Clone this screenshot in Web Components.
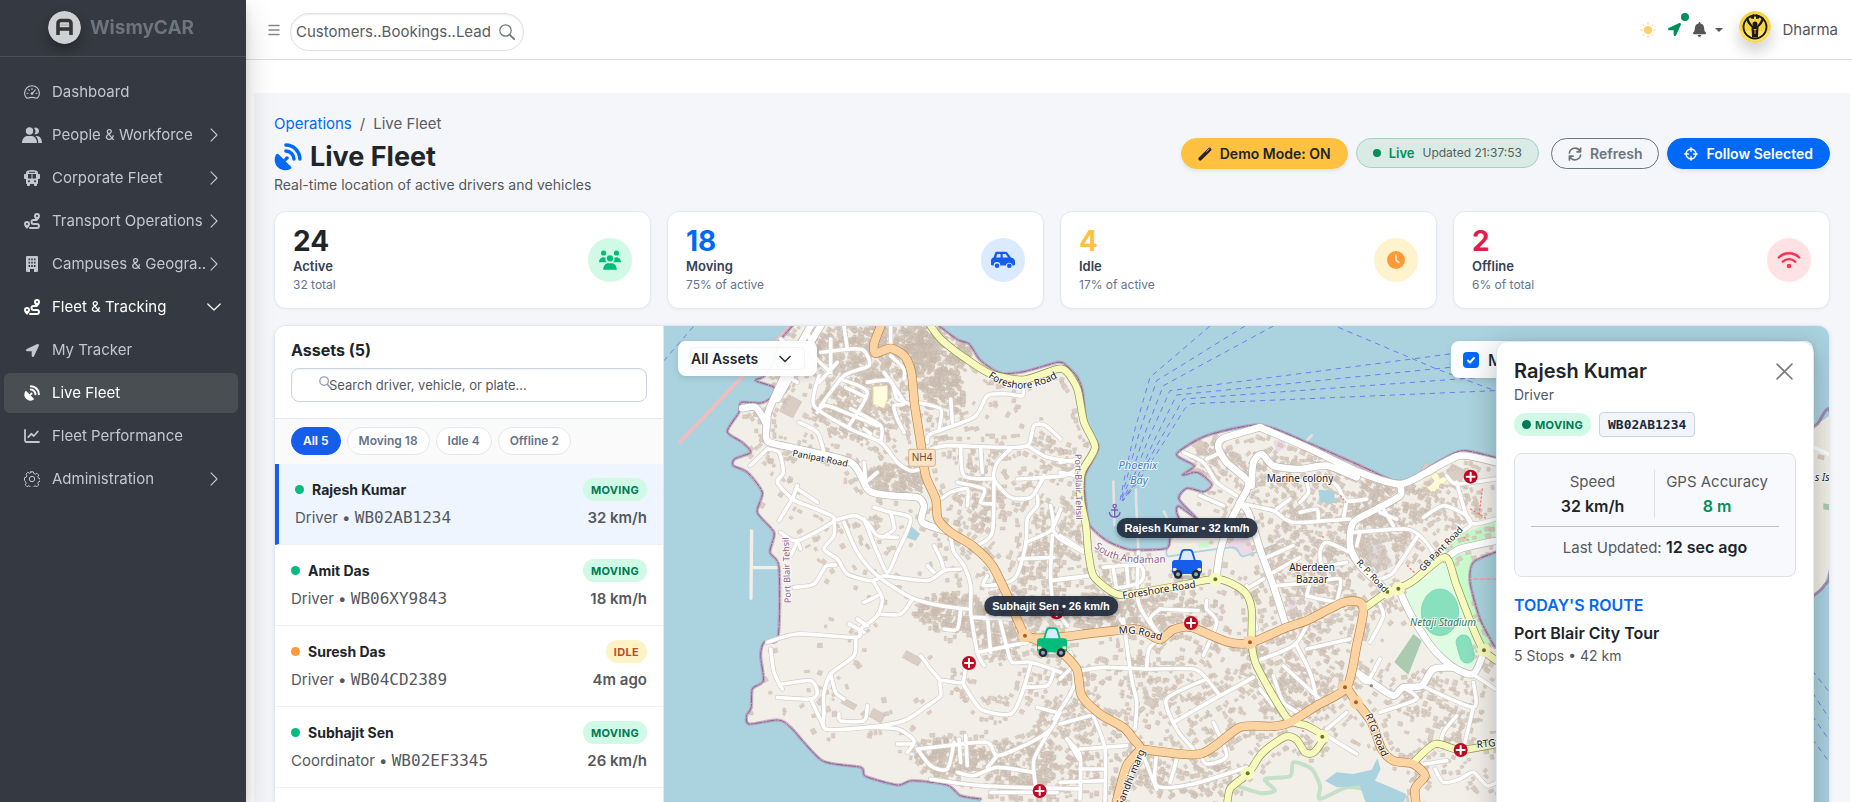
<!DOCTYPE html>
<html lang="en">
<head>
<meta charset="utf-8">
<meta name="viewport" content="width=device-width, initial-scale=1">
<title>WismyCAR – Live Fleet</title>
<style>
html, body { margin: 0; height: 100%; }
body { font: 16px/24px Inter, "Liberation Sans", sans-serif; color: #212529; background: #fff; overflow: hidden; }
</style>
</head>
<body>
<fleet-app></fleet-app>
<script>
const define = (tag, html, setup) => customElements.define(tag, class extends HTMLElement {
  constructor() {
    super();
    this.attachShadow({ mode: 'open' });
  }
  connectedCallback() {
    if (this.shadowRoot.childNodes.length) return;
    const t = document.createElement('template');
    t.innerHTML = '<style>*{box-sizing:border-box}:host([hidden]){display:none}</style>' +
      (typeof html === 'function' ? html(n => this.getAttribute(n) || '') : html);
    this.shadowRoot.append(t.content.cloneNode(true));
    if (setup) setup(this.shadowRoot, this);
  }
});

/* ---------- icons ---------- */
const line = (d, w = 1) => `<path d="${d}" fill="none" stroke="currentColor" stroke-width="${w}" stroke-linecap="round" stroke-linejoin="round"/>`;
const ICONS = {
  speed: ['0 0 16 16', line('M2.6 14C1.2 12.7.6 11 .6 9.2a7.4 7.4 0 0 1 14.8 0c0 1.800-.6 3.500-2 4.800-1.200.5-1.800-.6-5.400-.6s-4.200 1.100-5.400.6zM8 4.400v1M4.700 5.700l.7.7M3 9.300h1M12 9.300h1M8 9.600l3.300-3.800', 1.1) + '<circle cx="8" cy="9.600" r="1.300" fill="currentColor"/>'],
  people: ['0 0 20 16', '<circle cx="7.500" cy="4" r="3.700"/><path d="M12 .9a3.400 3.400 0 1 1 .5 6.200 5 5 0 0 0-.5-6.200zM0 16c0-4 2.700-7 5-7h5c2.300 0 5 3 5 7zM16.300 16c0-3-1-5.500-2.800-7H15c3 0 5 3 5 7z"/>'],
  bus: ['0 0 16 16', '<path fill-rule="evenodd" d="M8 0c4 0 6 1 6 2.500V4h1c.6 0 1 .5 1 1v3c0 .6-.4 1-1 1h-1v4c0 .6-.4 1-1 1v1c0 .6-.4 1-1 1h-1c-.6 0-1-.4-1-1v-1H6v1c0 .6-.4 1-1 1H4c-.6 0-1-.4-1-1v-1c-.6 0-1-.4-1-1V9H1c-.6 0-1-.4-1-1V5c0-.500.4-1 1-1h1V2.500C2 1 4 0 8 0zM4 4v4.500h3.500V4zm4.500 0v4.500H12V4zM5 10.300a1 1 0 1 0 0 2 1 1 0 0 0 0-2zm6 0a1 1 0 1 0 0 2 1 1 0 0 0 0-2zM5 1.800v1h6v-1z"/>'],
  route: ['0 0 16 16', '<path fill-rule="evenodd" d="M13 0a3 3 0 0 1 3 3c0 1.500-1.500 3.500-2.500 4.500h-1C11.500 6.500 10 4.500 10 3a3 3 0 0 1 3-3zm0 2a1 1 0 1 0 0 2 1 1 0 0 0 0-2zM3 8a3 3 0 0 1 3 3c0 1.500-1.500 3.500-2.500 4.500h-1C1.500 14.500 0 12.500 0 11a3 3 0 0 1 3-3zm0 2a1 1 0 1 0 0 2 1 1 0 0 0 0-2z"/>' + line('M12.500 7H9.500a2 2 0 0 0 0 4h3.500a2 2 0 0 1 0 4H6', 1.900)],
  building: ['0 0 12 16', '<path fill-rule="evenodd" d="M1 0h10a1 1 0 0 1 1 1v14a1 1 0 0 1-1 1H8v-3H4v3H1a1 1 0 0 1-1-1V1a1 1 0 0 1 1-1zm1.500 2.500v1.800h1.600V2.500zm2.700 0v1.800h1.600V2.500zm2.700 0v1.800h1.600V2.500zM2.500 5.800v1.800h1.600V5.800zm2.700 0v1.800h1.600V5.800zm2.700 0v1.800h1.600V5.800zM2.500 9.100v1.800h1.600V9.100zm2.700 0v1.800h1.600V9.100zm2.700 0v1.800h1.600V9.100z"/>'],
  arrow: ['0 0 512 512', '<path d="M444.520 3.520L28.740 195.420c-47.970 22.390-31.980 92.750 19.190 92.750h175.910v175.910c0 51.170 70.360 67.170 92.750 19.190l191.900-415.780c15.990-38.380-25.590-79.970-63.970-63.970z"/>'],
  dish: ['0 0 16 16', '<path d="M1.200 6.600c.3-.6.900-.7 1.400-.2l2.900 2.900.8-.8a1.100 1.100 0 1 1 1.200 1.200l-.8.8 2.900 2.900c.5.500.4 1.100-.2 1.400A6 6 0 0 1 1.200 6.600z"/>' + line('M6.800 1.200a8 8 0 0 1 8 8M6.800 4.600a4.600 4.600 0 0 1 4.600 4.600', 2)],
  chart: ['0 0 16 14', line('M1 1v10.500c0 .9.6 1.500 1.500 1.500H15M4.300 8.200l3-3.400 2.500 2.200 4-4.500', 1.800)],
  gear: ['0 0 16 16', line('M6.700.8h2.600l.5 1.700 1.500.7 1.600-.9 1.800 1.800-.9 1.600.7 1.500 1.700.5v2.600l-1.700.5-.7 1.500.9 1.600-1.800 1.800-1.600-.9-1.500.7-.5 1.700H6.700l-.5-1.700-1.500-.7-1.600.9-1.800-1.800.9-1.600-.7-1.500L.5 9.300V6.700l1.700-.5.7-1.500L2 3.100l1.800-1.800 1.600.9 1.500-.7z') + '<circle cx="8" cy="8" r="2.700" fill="none" stroke="currentColor"/>'],
  right: ['0 0 8 14', line('M1 .8l6 6.200-6 6.200', 1.100)],
  down: ['0 0 14 8', line('M.8 1L7 7l6.200-6', 1.200)],
  chev: ['0 0 12 8', line('M1 1.500l5 5 5-5', 1.700)],
  menu: ['0 0 12 12', line('M1 1.500h10M1 6h10M1 10.500h10', 1.600)],
  search: ['0 0 16 16', '<circle cx="6.500" cy="6.500" r="5.700" fill="none" stroke="currentColor" stroke-width="1.200"/>' + line('M10.800 10.800l4.400 4.400', 1.800)],
  find: ['0 0 14 14', '<circle cx="5.500" cy="5.500" r="4.600" fill="none" stroke="currentColor" stroke-width="1.500"/>' + line('M9 9l4 4', 1.800)],
  sun: ['0 0 16 16', '<circle cx="8" cy="8" r="4"/>' + line('M8 .6v1.600M8 13.800v1.600M.6 8h1.600M13.800 8h1.600M2.800 2.800l1.100 1.100M12.100 12.100l1.100 1.100M2.800 13.200l1.100-1.100M12.100 3.900l1.100-1.100')],
  bell: ['0 0 448 512', '<path d="M224 512c35.320 0 63.970-28.650 63.970-64H160.030c0 35.350 28.650 64 63.970 64zm215.390-149.710c-19.320-20.760-55.470-51.990-55.470-154.290 0-77.700-54.480-139.900-127.940-155.160V32c0-17.670-14.320-32-31.980-32s-31.980 14.330-31.980 32v20.840C118.560 68.100 64.080 130.300 64.080 208c0 102.300-36.150 133.530-55.470 154.290-6 6.450-8.660 14.160-8.610 21.710.11 16.400 12.980 32 32.100 32h383.800c19.120 0 32-15.600 32.100-32 .05-7.550-2.610-15.270-8.610-21.710z"/>'],
  wand: ['0 0 14 14', line('M2.200 11.800l9.400-9.400', 3.600) + '<path d="M8.600 4.600l2.700-2.600" stroke="#ffc13f" stroke-width=".9" stroke-linecap="round"/>'],
  refresh: ['0 0 14 14', line('M1.400 5.800A5.700 5.700 0 0 1 12 4.200M12.600 8.200A5.700 5.700 0 0 1 2 9.800M12.600 1v3.800H9M1.400 13V9.200H5', 1.700)],
  target: ['0 0 14 14', '<circle cx="7" cy="7" r="4.900" fill="none" stroke="currentColor" stroke-width="1.600"/>' + line('M7 .7v3.800M7 9.500v3.800M.7 7h3.800M9.500 7h3.800', 1.300)],
  users: ['0 0 22 20', '<circle cx="4.600" cy="3" r="2.600"/><circle cx="17.400" cy="3" r="2.600"/><circle cx="11" cy="8.300" r="3.100"/><path d="M0 12.300c0-2.700 2-5 4.600-5 .8 0 1.500.2 2 .5-.6 1.800.1 3.500 1.200 4.500zM22 12.300c0-2.700-2-5-4.600-5-.8 0-1.500.2-2 .5.6 1.800-.1 3.500-1.200 4.500zM4.200 19.800c0-4 2.200-6.600 5.300-6.600h3c3.100 0 5.300 2.600 5.300 6.600z"/>'],
  car: ['0 0 24 18', '<path fill-rule="evenodd" d="M5.800.8h8.400c.9 0 1.800.5 2.400 1.200L20 6.500c2.300.2 4 1.900 4 4.100v2.600c0 .7-.5 1.200-1.200 1.200h-1.300a3.300 3.300 0 0 0-6.500 0H9.300a3.300 3.300 0 0 0-6.600 0H1.200C.5 14.400 0 13.900 0 13.200V9.600c0-1.600 1.100-2.900 2.600-3.100L4 2.200C4.300 1.300 5 .8 5.800.8zM6.300 3L5.200 6.400h4.300V3zm5.400 0v3.400h5.400L14.500 3z"/><circle cx="6" cy="14.800" r="2.300"/><circle cx="18.300" cy="14.800" r="2.300"/>'],
  clock: ['0 0 18 18', '<circle cx="9" cy="9" r="9"/><path d="M9 4v5.200l2.800 2.300" fill="none" stroke="#fff3cd" stroke-width="1.600" stroke-linecap="round"/>'],
  wifi: ['0 0 24 18', line('M1.800 6.500a14.500 14.500 0 0 1 20.400 0M5.800 10.700a8.800 8.800 0 0 1 12.400 0', 2.400) + '<circle cx="12" cy="15" r="2.300"/>'],
  close: ['0 0 16 16', line('M1 1l14 14M15 1L1 15', 1.500)]
};
define('app-icon', a => {
  const [box, body] = ICONS[a('name')];
  const [, , w, h] = box.split(' ').map(Number);
  const s = +a('size') || 16;
  return `<style>:host{display:inline-flex;flex:none}svg{display:block}</style>
  <svg width="${s}" height="${Math.round(s * h / w)}" viewBox="${box}" fill="currentColor" aria-hidden="true">${body}</svg>`;
});

/* ---------- sidebar ---------- */
define('nav-item', a => `<style>
:host{display:block}
a{display:flex;align-items:center;height:40px;padding:0 16px;border-radius:6px;color:#c2c7d0;text-decoration:none;font-size:15px}
:host([open]) a{color:#fff}
:host([current]) a{background:#494e53;color:#fff}
.ic{flex:none;width:24px;margin-right:8px;display:flex;justify-content:center}
.tx{flex:1;min-width:0;white-space:nowrap}
.end{width:16px;display:flex;justify-content:center}
</style><a href="#"><span class="ic"><app-icon name="${a('icon')}" size="${a('size') || 16}"></app-icon></span><span class="tx"><slot></slot></span>
${a('end') ? `<span class="end"><app-icon name="${a('end')}" size="${a('end') === 'down' ? 14 : 8}"></app-icon></span>` : ''}</a>`);

define('side-bar', `<style>
:host{display:flex;flex-direction:column;width:246px;flex:none;background:#353941;box-shadow:0 14px 28px rgba(0,0,0,.18),0 4px 10px rgba(0,0,0,.1);z-index:2}
.brand{display:flex;align-items:center;justify-content:center;gap:9px;height:57px;padding:0 4px 1px 0;border-bottom:1px solid #4b5159;color:#6a757d;font-weight:700;font-size:19px;text-decoration:none}
.logo{width:33px;height:33px;border-radius:50%;box-shadow:0 6px 12px rgba(0,0,0,.3)}
nav{display:flex;flex-direction:column;gap:3px;padding:15px 8px 16px 4px}
</style>
<a class="brand" href="#"><svg class="logo" viewBox="0 0 33 33" aria-hidden="true"><circle cx="16.500" cy="16.500" r="16.500" fill="#cfd0d1"/><path d="M10 24V12.500a3 3 0 0 1 3-3h7a3 3 0 0 1 3 3V24M10 18h13" fill="none" stroke="#343536" stroke-width="3.600"/><path d="M12 14h9" stroke="#aaa" stroke-width="1"/></svg>WismyCAR</a>
<nav aria-label="Main">
<nav-item icon="speed">Dashboard</nav-item>
<nav-item icon="people" size="20" end="right">People &amp; Workforce</nav-item>
<nav-item icon="bus" end="right">Corporate Fleet</nav-item>
<nav-item icon="route" end="right">Transport Operations</nav-item>
<nav-item icon="building" size="12" end="right">Campuses &amp; Geogra..</nav-item>
<nav-item icon="route" end="down" open>Fleet &amp; Tracking</nav-item>
<nav-item icon="arrow" size="13">My Tracker</nav-item>
<nav-item icon="dish" current>Live Fleet</nav-item>
<nav-item icon="chart">Fleet Performance</nav-item>
<nav-item icon="gear" end="right">Administration</nav-item>
</nav>`);

/* ---------- top bar ---------- */
define('top-bar', `<style>
:host{display:flex;align-items:center;height:60px;flex:none;border-bottom:1px solid #dcdee0;padding:0 14px 0 14px;color:#555;font-size:15px}
button{border:0;background:none;padding:0;color:inherit;font:inherit;display:flex;align-items:center}
.menu{color:#888;width:28px;justify-content:center;height:40px}
label{display:flex;align-items:center;width:234px;height:38px;border:1px solid #dee0e6;border-radius:19px;padding:0 8px 0 5px;color:#6c757d;box-shadow:inset 0 1px 2px rgba(0,0,0,.07)}
.shell{padding:4px 0 0 2px}
input{flex:1;min-width:0;border:0;outline:0;padding:0;background:none;font:inherit;color:#555}
input::placeholder{color:#595c5f;opacity:1}
.right{margin-left:auto;display:flex;align-items:center;color:#555}
.sun{color:#ffcf6b}
.loc{color:#008f5a;position:relative;margin-left:12px}
.loc i{position:absolute;width:8px;height:8px;border-radius:50%;background:#008f5a;right:-8px;top:-10px}
.bell{margin-left:12px;gap:9px}
.caret{border:4px solid transparent;border-top-color:#555;border-bottom:0}
.user{margin-left:16px;gap:11px}
.ava{width:32px;height:32px;border-radius:50%;box-shadow:0 8px 16px rgba(0,0,0,.2);margin-top:-6px}
</style>
<button class="menu" aria-label="Toggle menu"><app-icon name="menu" size="12"></app-icon></button>
<div class="shell"><label><input type="text" aria-label="Search" placeholder="Customers..Bookings..Lead"><app-icon name="search"></app-icon></label></div>
<div class="right">
<button class="sun" aria-label="Theme"><app-icon name="sun"></app-icon></button>
<button class="loc" aria-label="Tracking on"><app-icon name="arrow" size="13"></app-icon><i></i></button>
<button class="bell" aria-label="Notifications"><app-icon name="bell" size="13"></app-icon><span class="caret"></span></button>
<button class="user"><svg class="ava" viewBox="0 0 32 32" aria-hidden="true"><circle cx="16" cy="16" r="16" fill="#f7d443"/><path d="M1 20a16 16 0 0 0 30 0z" fill="#fce36a"/><circle cx="16" cy="16" r="11.500" fill="none" stroke="#1b1b12" stroke-width="1.800"/><circle cx="16" cy="13" r="2.500" fill="#1b1b12"/><path d="M7 7c1 5 3 7 5.500 9l.5 10h6l.5-10c2.500-2 4.500-4 5.500-9l-2-1c-1 4-3 7-5 9h-4c-2-2-4-5-5-9zM11 5l4-2v5l-3-.5zM21 5l-4-2v5l3-.5z" fill="#1b1b12"/><path d="M16 18v5M14.500 18.500h3" stroke="#f7a543" stroke-width="1"/></svg>Dharma</button>
</div>`);

/* ---------- heading ---------- */
define('page-heading', `<style>
:host{display:flex;justify-content:space-between;align-items:flex-start}
.crumb{display:flex;gap:8px;color:#595c5f}
a{color:#0069f7;text-decoration:none}
.crumb{font-size:15px}
h1{display:flex;align-items:center;gap:8px;margin:5px 0 2px;font-size:27px;line-height:32px;font-weight:700;color:#212529}
h1 app-icon{color:#0069f7}
p{margin:0;font-size:14px;line-height:20px;color:#55595d}
.acts{display:flex;gap:8px;padding-top:26px}
button,.live{display:flex;align-items:center;height:31px;border-radius:16px;border:1px solid;font:600 14px/20px Inter,sans-serif;padding:0 16px;gap:8px;white-space:nowrap}
.demo{background:#ffc13f;border-color:#ffc13f;color:#212529;box-shadow:0 2px 4px rgba(0,0,0,.08)}
.live{height:30px;background:#daebe6;border-color:#a3d3c0;font-size:13px;gap:8px;color:#008f5a;margin-right:4px}
.live i{width:8px;height:8px;border-radius:50%;background:#008f5a}
.live span{font-weight:400;font-size:12px;color:#55605d}
.ref{background:none;border-color:#6c757d;color:#6c757d}
.fol{background:#0069f7;border-color:#0069f7;color:#fff;box-shadow:0 2px 4px rgba(0,0,0,.08)}
</style>
<div><nav class="crumb" aria-label="Breadcrumb"><a href="#">Operations</a><span>/</span><span>Live Fleet</span></nav>
<h1><app-icon name="dish" size="28"></app-icon>Live Fleet</h1>
<p>Real-time location of active drivers and vehicles</p></div>
<div class="acts"><button class="demo"><app-icon name="wand" size="14"></app-icon>Demo Mode: ON</button>
<div class="live"><i></i>Live <span>Updated 21:37:53</span></div>
<button class="ref"><app-icon name="refresh" size="14"></app-icon>Refresh</button>
<button class="fol"><app-icon name="target" size="14"></app-icon>Follow Selected</button></div>`);

define('stat-card', a => `<style>
:host{display:flex;justify-content:space-between;align-items:center;background:#fff;border:1px solid #e2e8f0;border-radius:12px;padding:14px 18px;box-shadow:0 1px 3px rgba(0,0,0,.04)}
b{display:block;font-size:28px;line-height:30px;font-weight:700;color:${a('ink')}}
strong{display:block;font-size:13px;line-height:20px;font-weight:600;color:#334155}
small{display:block;font-size:12px;line-height:18px;color:#64748b}
.c{width:44px;height:44px;border-radius:50%;background:${a('tint')};color:${a('tone')};display:flex;align-items:center;justify-content:center}
</style><div><b>${a('value')}</b><strong>${a('label')}</strong><small><slot></slot></small></div><span class="c"><app-icon name="${a('icon')}" size="${a('size')}"></app-icon></span>`);

/* ---------- asset list ---------- */
const TONES = { MOVING: ['#d0fae5', '#007a55', '#00bc7d'], IDLE: ['#fef3c6', '#bb4d1f', '#fd9a37'] };
define('status-pill', a => `<style>
:host{display:inline-flex;align-items:center;gap:4px;height:23px;padding:0 8px;border-radius:12px;background:${TONES[a('state')][0]};color:${TONES[a('state')][1]};font-size:11px;line-height:16px;font-weight:700;letter-spacing:.3px}
i{width:9px;height:9px;border-radius:50%;background:currentColor}
</style>${a('dot') ? '<i></i>' : ''}${a('state')}`);

define('asset-row', a => `<style>
:host{display:block;border-bottom:1px solid #eef2f7;padding:14px 16px}
:host([selected]){background:#eef5fe;border-left:4px solid #155dea}
div{display:flex;justify-content:space-between;align-items:center}
.n{display:flex;align-items:center;gap:8px;font-size:14px;line-height:23px;font-weight:700}
i{width:9px;height:9px;border-radius:50%;background:${TONES[a('state')][2]}}
.b{margin-top:5px;height:24px;color:#55595d;font-size:15px}
code{font:16px/24px "DejaVu Sans Mono",monospace}
b{font-weight:600}
</style><div><span class="n"><i></i>${a('name')}</span><status-pill state="${a('state')}"></status-pill></div>
<div class="b"><span>${a('role')} • <code>${a('plate')}</code></span><b>${a('info')}</b></div>`);

define('asset-list', `<style>
:host{display:block;width:389px;flex:none;background:#fff;border-right:1px solid #e2e8f0}
header{padding:12px 16px 16px;border-bottom:1px solid #e2e8f0}
h2{margin:0 0 6px;font-size:16px;line-height:24px;font-weight:700}
label{display:block;position:relative;color:#94a3b8}
label app-icon{position:absolute;left:28px;top:8px}
input{display:block;width:100%;height:34px;border:1px solid #cbd5e1;border-radius:8px;padding:0 12px 0 37px;font:13px/20px Inter,sans-serif;box-shadow:inset 0 1px 2px rgba(0,0,0,.06)}
input::placeholder{color:#55595d;opacity:1}
.f{display:flex;gap:6px;padding:8px 16px 9px;background:#fafafa}
button{height:28px;border:1px solid #e2e8f0;border-radius:14px;background:#fff;color:#64748b;padding:0 11px;font:600 12px/18px Inter,sans-serif}
button.on{background:#155dea;border-color:#155dea;color:#fff}
</style>
<header><h2>Assets (5)</h2><label><input type="search" aria-label="Search assets" placeholder="Search driver, vehicle, or plate..."><app-icon name="find" size="13"></app-icon></label></header>
<div class="f"><button class="on">All 5</button><button>Moving 18</button><button>Idle 4</button><button>Offline 2</button></div>
<asset-row selected name="Rajesh Kumar" role="Driver" plate="WB02AB1234" info="32 km/h" state="MOVING"></asset-row>
<asset-row name="Amit Das" role="Driver" plate="WB06XY9843" info="18 km/h" state="MOVING"></asset-row>
<asset-row name="Suresh Das" role="Driver" plate="WB04CD2389" info="4m ago" state="IDLE"></asset-row>
<asset-row name="Subhajit Sen" role="Coordinator" plate="WB02EF3345" info="26 km/h" state="MOVING"></asset-row>`);

/* ---------- map data (three units per pixel) ---------- */
const E = 1188;
const pts = (s, dx = 0) => s.trim().split(/\s+/).map(p => { const [x, y] = p.split(',').map(Number); return [x + dx, y]; });
const west = pts('385,21 345,70 330,130 300,172 275,185 330,205 322,235 290,252 232,250 225,280 190,338 235,370 260,400 212,420 208,440 250,460 295,520 280,580 330,640 318,700 345,745 342,955 300,970 290,1010 298,1085 265,1110 262,1165 248,1190 255,1215 340,1203 380,1225 475,1325 590,1345 605,1372 700,1398 745,1385 850,1398 890,1430 950,1440');
const north = pts('825,21 880,62 915,75 950,125 1010,162 1080,158 1180,130 1205,138 1240,175 1256,220 1268,320 1303,385 1263,470 1266,560 1278,620 1328,665 1388,690 1423,693 1508,688 1520,655 1560,640 1538,580 1545,562 1600,600 1545,540 1568,508 1620,518 1643,495 1600,460 1555,468 1590,440 1538,405 1628,350 1788,318 1928,370 2088,440 2188,485 2238,480 2328,425 2398,395 2493,415');
const bay = pts('2540,680 2493,700 2428,730 2418,790 2448,900 2493,985');
const LAND = [...west, [950, 1850], [2640, 1850], [2600, 1150], ...bay.slice().reverse(), ...north.slice().reverse()];
const smooth = p => {
  let d = `M${p[0]}`;
  for (let i = 0; i < p.length - 1; i++) {
    const a = p[i - 1] || p[i], b = p[i], c = p[i + 1], e = p[i + 2] || c, k = 8;
    d += `C${[b[0] + (c[0] - a[0]) / k, b[1] + (c[1] - a[1]) / k, c[0] - (e[0] - b[0]) / k, c[1] - (e[1] - b[1]) / k, c[0], c[1]].map(Math.round)}`;
  }
  return d;
};
const many = (s, dx) => s.split(';').filter(x => x.trim()).map(x => pts(x, dx));
const minor = [
  ...many(`310,390 345,400 358,460 340,490 385,540 430,560 480,580 510,605 400,665 350,640;258,440 310,390;385,540 345,605;400,500 385,540;400,510 460,550;400,665 410,690;400,665 380,710;510,605 570,590 610,610 640,650 700,655;510,605 510,650 480,690 520,720 550,765 620,785 660,770;515,738 485,742 450,795 390,805;540,610 580,700 640,770 740,835 830,860 910,870;600,600 640,700 670,760 700,700 740,600 680,580 630,565;680,580 690,630 655,655;660,770 790,785 840,755 890,750;810,680 830,720 840,755;790,740 810,760;860,650 870,700 900,740 920,800 920,880 940,1000 960,1040;630,790 655,840 640,890 590,930 575,955 400,945 310,970;600,850 640,830;640,885 710,885 745,840;555,915 600,940;580,900 610,920;575,955 570,1010 500,1065 480,1120 480,1180 485,1230 610,1225 720,1205 790,1160 830,1130 830,1085 895,1090 905,1030;770,1010 800,1050 830,1085;895,1090 950,1170 1040,1185 1075,1120 1100,1035;320,990 330,1060 355,1110;355,1095 440,1085 460,1120 440,1140 340,1135;440,1140 480,1225;500,1065 515,1120 540,1140;525,1185 530,1205 600,1205 610,1160;610,1225 700,1230 750,1265 730,1300;700,1275 745,1275;760,1290 850,1280 970,1270 1000,1310 1100,1270 1160,1230 1188,1180;760,1290 800,1340 850,1350 870,1270;880,1360 930,1370 1000,1345 1110,1360;1000,1310 970,1345;1160,1230 1110,1320 1115,1400;980,1420 1180,1420;905,1250 910,1340;885,1260 890,1330;800,1380 950,1400 1250,1410;940,1000 1090,970;970,890 980,1000;1005,890 1030,990 1045,1030 1100,1030 1190,1060;930,895 1040,900;890,870 880,930 840,930;1080,1105 1150,1100 1170,1055;1220,1000 1230,1100 1170,1200;1120,1165 1175,1180;1210,1260 1245,1320;465,170 450,260 560,330 650,370 700,430 740,455 770,450;470,100 560,90 600,95 615,140 540,170 470,260;465,190 520,130;530,180 610,220 555,320;545,205 605,235;610,190 680,185 700,240 760,260;660,160 720,250 690,260 700,300 720,340;680,110 720,150 720,180;430,30 450,110 500,160;540,21 550,90;500,60 500,150;680,21 680,90;760,250 830,270 825,330;790,370 800,345 930,295 970,230 1030,225 1075,230 1080,190;860,240 865,310;800,390 850,380 1000,385 1090,380 1110,320 1145,320 1190,360;1090,380 1150,415 1240,430;1040,390 1000,430 990,480 1040,535 1100,535 1130,490 1140,470;1060,480 1200,470 1250,440;990,480 985,640 940,680;890,380 900,470 985,480;880,490 960,510 950,550 985,555;830,540 860,520 910,510 910,560;950,390 955,460;1120,530 1120,560 1090,600 1085,680 1050,780 960,800 970,770;1160,560 1165,630 1085,670;1190,570 1165,630;1165,630 1188,660 1260,700;1165,650 1160,780 1170,860 1210,920;1160,785 1250,775;1065,720 1170,715;405,310 460,340 480,400;600,430 605,490;640,460 605,490;650,370 650,320 560,270;460,280 490,260 640,320;600,330 620,345;350,60 440,130;330,150 400,190`, 0),
  ...many(`0,430 60,420;0,460 50,470;0,650 80,700;0,780 90,770;110,760 130,810 240,790 240,740 130,745;235,700 235,850 290,940;160,750 170,810;200,745 205,800;300,870 415,875;300,870 270,900 300,950;440,845 440,870 470,910 430,1010;180,900 200,930;580,1030 700,980 740,920;710,980 750,1060 770,1140;640,1070 670,1150 730,1190;580,1075 480,1130 340,1210;60,1055 130,1045 260,1050 400,1050 440,1080 480,1130;440,1080 320,1140 350,1230 400,1290;190,900 215,1080 230,1150 225,1230;340,930 270,985 260,1050;0,1215 90,1190;0,1080 40,1040;20,1260 60,1310 60,1440;60,1290 200,1280;60,1350 135,1350;0,1390 135,1385;100,1190 135,1290 135,1446;290,1300 290,1400 400,1395 560,1345;460,1210 500,1310 440,1335 420,1305;350,1320 330,1390;250,1310 290,1410;890,1060 920,1090 960,1020;960,1180 1070,1140 1030,1105;800,1230 860,1180;800,1250 890,1305;1085,1100 1240,1165 1240,1090;1240,1165 1215,1270;1245,1070 1305,1110;1190,1190 1150,1240 1140,1290;1060,1340 1160,1325;1125,1350 1150,1390 1200,1380 1240,1360 1280,1400 1310,1390;550,555 640,575 700,610 870,600;650,570 690,540;740,490 745,520 720,550;720,580 770,570 775,600;800,480 830,500 860,545 920,540;860,545 850,600;880,640 1040,630 1090,660 1120,700;900,640 890,680;1070,655 1000,760 960,780;960,580 1010,600;970,570 1000,620;1090,595 1150,560 1220,590 1230,620 1180,650;1190,490 1230,610 1305,600;1160,470 1190,495 1305,480;870,700 800,670 780,700 790,740 860,730;620,715 700,680;640,760 720,715;640,800 760,790 840,780 830,850;740,830 750,790;740,830 830,850;550,815 610,780;370,400 430,430 470,490 530,530;440,420 480,400;420,530 490,560;930,970 970,890 950,840;590,930 560,800;670,1040 780,1140;870,960 740,990;600,1110 640,1160`, E)
];
const tertiary = [
  ...many('310,300 310,365 380,385 560,430 615,515 690,530 760,535 780,560 775,610 860,640;440,21 390,110 320,260 305,310;235,268 275,265 305,310;470,21 410,120 340,240', 0),
  ...many('1155,720 1200,690 1310,665;1025,830 1060,900 1120,990 1180,1045 1240,1065 1272,1000;600,325 490,358 475,385 500,430 565,490 540,550 505,620 480,700 470,770;540,550 565,580 600,690 640,800 675,910;575,500 580,430 605,405 640,440 720,450 800,440 890,475;600,325 740,385 900,460 1020,495 1100,460 1200,410 1310,430;1020,495 1020,530 950,570 880,610 870,680 900,740 980,815;1180,1045 1120,1050 1085,1100 1030,1105 1000,1130 950,1100 890,1060', E)
];
const yellow = [
  pts('800,21 830,60 900,115 980,165 1080,182 1180,150 1208,158 1240,210 1260,310 1293,385 1253,460 1250,540 1266,620 1273,700 1288,770 1338,815 1378,828 1518,805 1658,780 1738,815 1763,870 1763,970 1778,1040 1868,1195 1928,1220 1978,1253 1950,1300 1923,1300 1898,1262 1868,1252 1828,1275 1788,1310 1753,1363 1698,1410 1688,1480'),
  ...many('910,870 980,820 1015,808 1060,785 1155,715 1190,800 1240,930 1272,995 1310,1025;1060,1330 1125,1275 1200,1293 1310,1275', E)
];
const orange = [
  pts('650,21 630,75 635,103 680,88 720,110 742,160 752,260 770,370 785,470 815,540 822,600 860,640 925,680 985,740 1030,830 1075,935 1105,957 1200,953 1288,942 1408,930 1448,942 1488,962 1528,932 1583,925 1688,968 1758,972 1868,925 1928,905 2038,850 2088,850 2098,880 2078,980 2048,1105 1958,1160 1878,1210 1828,1222 1728,1225 1608,1305 1428,1290'),
  pts('1085,950 1180,990 1238,1050 1253,1130 1308,1185 1378,1225 1408,1260 1428,1290 1388,1340 1358,1446 1350,1500'),
  pts('2048,1105 2078,1150 2123,1210 2153,1290 2188,1325 2248,1335 2283,1370 2253,1410 2260,1480')
];
const inside = (x, y) => {
  let r = false;
  for (let i = 0, j = LAND.length - 1; i < LAND.length; j = i++) {
    const [a, b] = LAND[i], [c, d] = LAND[j];
    if ((b > y) !== (d > y) && x < (c - a) * (y - b) / (d - b) + a) r = !r;
  }
  return r;
};
/* footprints line the streets and pack the dense quarters */
const buildings = () => {
  let seed = 7, out = '';
  const rnd = () => (seed = (seed * 16807) % 2147483647) / 2147483647;
  const put = (x, y, w, h, t) => {
    if (!inside(x, y) || (x > 2225 && x < 2430 && y > 740 && y < 1050)) return;
    const c = Math.cos(t), s = Math.sin(t), q = (u, v) => `${Math.round(x + u * c - v * s)},${Math.round(y + u * s + v * c)}`;
    out += `M${q(-w, -h)}L${q(w, -h)} ${q(w, h)} ${q(-w, h)}z`;
  };
  for (const r of [...minor, ...tertiary, ...yellow, ...orange]) for (let i = 1; i < r.length; i++) {
    const [a, b] = r[i - 1], [c, d] = r[i], L = Math.hypot(c - a, d - b), t = Math.atan2(d - b, c - a);
    for (let k = 8; k < L; k += 14) for (const o of [-1, 1]) {
      if (rnd() < (a < 850 && b > 480 ? .84 : .5)) continue;
      const off = o * (17 + rnd() * 20), f = k / L;
      put(a + (c - a) * f - Math.sin(t) * off, b + (d - b) * f + Math.cos(t) * off, 3 + rnd() * 5, 3 + rnd() * 4, t);
    }
  }
  const zones = [[640, 90, 190, 90, 420, .3], [590, 270, 140, 90, 220, .4], [820, 110, 100, 110, 280, .2], [840, 220, 60, 70, 110, .1], [700, 480, 90, 50, 140, .3], [860, 880, 110, 60, 210, .1], [1000, 940, 80, 70, 110, .2], [950, 560, 90, 90, 80, .3], [1130, 800, 90, 130, 110, .1], [850, 1310, 110, 60, 170, .2], [1050, 1340, 130, 80, 180, .1], [1190, 1280, 90, 140, 110, .6], [1300, 880, 130, 60, 110, .2], [1500, 880, 190, 60, 130, .2], [1350, 1130, 190, 120, 110, .3], [1620, 1100, 150, 150, 80, .5], [1900, 1050, 150, 120, 130, .4], [1950, 700, 150, 120, 170, .3], [2150, 670, 90, 90, 130, .8], [2000, 540, 170, 80, 120, .5], [2190, 560, 120, 70, 110, .3], [1820, 480, 90, 100, 70, .8], [1650, 430, 80, 60, 50, .4], [2330, 1180, 130, 100, 70, .3], [1550, 1380, 160, 60, 80, .4], [1980, 860, 110, 80, 80, .3], [2330, 560, 120, 80, 50, .3], [1180, 560, 80, 200, 70, .4], [1900, 1150, 120, 80, 50, .8]];
  for (const [x, y, rx, ry, n, t] of zones) for (let i = 0; i < n; i++) {
    const g = Math.sqrt(rnd()), h = rnd() * 6.280;
    put(x + rx * g * Math.cos(h), y + ry * g * Math.sin(h), 3 + rnd() * 5, 3 + rnd() * 5, t + (rnd() > .8 ? .5 : 0));
  }
  for (let i = 0; i < 120; i++) put(250 + rnd() * 2300, 60 + rnd() * 1380, 3 + rnd() * 6, 3 + rnd() * 5, rnd() * 3);
  [[1610, 380, 22, 14], [1700, 640, 14, 30], [1460, 1150, 16, 12], [2150, 860, 16, 10], [2375, 465, 24, 22], [1850, 740, 12, 20], [380, 262, 22, 28], [640, 1190, 20, 14], [555, 1155, 22, 9], [745, 1018, 26, 12], [1900, 440, 20, 10], [2290, 450, 14, 14]].forEach(b => put(...b, .5));
  return out;
};
const road = (list, w, fill, casing) => ({ c: list.map(p => `<path d="${smooth(p)}" stroke="${casing}" stroke-width="${w + 4}"/>`).join(''), f: list.map(p => `<path d="${smooth(p)}" stroke="${fill}" stroke-width="${w}"/>`).join('') });
const poly = (s, dx, fill, extra = '') => `<polygon points="${pts(s, dx).join(' ')}" fill="${fill}" ${extra}/>`;
const cross = (x, y) => `<circle cx="${x}" cy="${y}" r="21" fill="#bf0a26"/><path d="M${x - 12} ${y}h24M${x} ${y - 12}v24" stroke="#fff" stroke-width="6"/>`;
const node = (x, y, c, r) => `<circle cx="${x}" cy="${y}" r="20" fill="${c}"/><circle cx="${x}" cy="${y}" r="6" fill="${r}"/>`;
const car = (x, y, c) => `<g transform="translate(${x} ${y})"><ellipse cy="40" rx="38" ry="6" fill="#000" opacity=".2"/><path d="M-27-8l8-28q3-9 11-9H8q8 0 11 9l8 28z" fill="${c}"/><path d="M-21-9l7-24q2-7 8-7H6q6 0 8 7l7 24z" fill="#dbeafe"/><rect x="-45" y="-12" width="90" height="42" rx="9" fill="${c}"/><rect x="-43" y="12" width="12" height="9" rx="4" fill="#fde68a"/><rect x="31" y="12" width="12" height="9" rx="4" fill="#fde68a"/><circle cx="-27" cy="31" r="13" fill="#1e293b"/><circle cx="27" cy="31" r="13" fill="#1e293b"/><circle cx="-27" cy="31" r="6" fill="#94a3b8"/><circle cx="27" cy="31" r="6" fill="#94a3b8"/></g>`;
const drawMap = () => {
  const mi = road(minor, 11, '#fff', '#d3cdc7'), te = road(tertiary, 20, '#fff', '#b9b5b0'), ye = road(yellow, 20, '#f7fabf', '#8b9440'), or = road(orange, 24, '#fcd3a2', '#b98646');
  const ferries = many('450,21 270,175 225,330 195,470 180,545;555,21 290,185 238,340 200,480 182,545;640,21 310,200 252,350 210,480 184,545;1170,105 330,215 265,360 215,490 186,545;1170,145 350,228 280,370 225,490 188,545;1305,172 370,240 290,380 235,480 188,545;1305,215 395,254 375,268 305,380 240,480 190,545;835,25 1130,150 1305,215', E);
  const border = [west, north, bay].map(p => `<path d="${smooth(p)}" stroke="#b38fb2" stroke-opacity=".65" stroke-width="10"/><path d="${smooth(p)}" stroke="#8d618b" stroke-width="3" stroke-dasharray="22 5 5 5"/>`).join('');
  const island = pts('3440,330 3460,315 3500,288 3500,735 3480,800 3440,835 3420,835');
  return `<g transform="scale(.333333)" fill="none" stroke-linejoin="round" stroke-linecap="round">
  <path d="M45 372L380 21" stroke="#f6bcbc" stroke-width="10" stroke-linecap="butt"/>
  <path d="M${LAND.join(' ')}z" fill="#f2efe9"/><path d="M${island.join(' ')}z" fill="#f2efe9"/>
  <path d="M263 636L261 838M262 746H345" stroke="#f2efe9" stroke-width="10"/>
  <path d="M1348 488L1351 618M1416 512v28l7 150M1500 578l14 30M1928 365l15-16" stroke="#e4e2dd" stroke-width="8"/>
  ${poly('1175,655 1305,608 1305,662 1195,690 1150,712', E, '#c8facc')}
  ${poly('1165,712 1235,700 1238,730 1230,790 1262,900 1300,985 1278,990', E, '#c8facc')}
  ${poly('1025,830 1155,725 1268,990 1240,1050 1185,1040 1110,975', E, '#dffce2')}
  <ellipse cx="2328" cy="880" rx="56" ry="70" fill="#88e0be" stroke="#6fd0ab" stroke-width="2"/><rect x="2382" y="947" width="44" height="86" rx="22" fill="#88e0be" stroke="#6fd0ab" stroke-width="2" transform="rotate(-16 2404 990)"/>
  ${poly('1060,945 1085,965 1045,1067 1003,1030', E, '#aacbaf')}
  ${poly('900,650 960,660 1000,740 960,760 905,720', E, '#dddbd9')}
  ${poly('480,640 560,645 580,700 550,710 500,680', E, '#ecdbe6')}${poly('640,365 670,362 680,385 650,400', E, '#ecd9e6')}${poly('680,840 705,835 715,880 690,890', E, '#ecd9e6')}
  ${poly('1092,495 1125,460 1165,480 1120,525', E, '#fdfcd9', 'stroke="#ecdf8e" stroke-width="3"')}
  ${poly('413,525 425,520 465,545 455,556', E, '#aad3df')}${poly('415,672 450,668 450,684 415,686', E, '#c8facc')}
  <path d="${smooth(pts('320,690 325,712 400,700 520,685 550,712 650,675', E))}" stroke="#aad3df" stroke-width="5"/>
  <path d="${buildings()}" fill="#dacec4" stroke="#c6b8ac" stroke-width="1.500"/>
  ${poly('628,203 670,200 670,240 660,268 628,255', 0, '#fffde0', 'stroke="#f0e79a" stroke-width="2"')}
  ${poly('738,618 768,645 755,665 725,655', 0, '#aad3df')}${poly('775,512 822,515 825,552 780,550', E, '#aad3df')}
  <path d="${smooth(pts('530,1400 600,1422 645,1415 615,1380 690,1372 700,1330 755,1350 780,1400 780,1440 860,1405 920,1415 925,1460', E))}" stroke="#9fd3ab" stroke-opacity=".55" stroke-width="12"/>
  ${poly('795,1385 830,1360 880,1365 935,1352 952,1318 962,1350 945,1385 1005,1410 1038,1425 1030,1460 920,1460 900,1400 830,1405', E, '#aad3df')}
  ${border}<path d="${smooth(island)}" stroke="#8d618b" stroke-opacity=".6" stroke-width="9"/>
  ${mi.c}${te.c}${mi.f}${te.f}
  ${ye.c}${or.c}${ye.f}${or.f}
  ${[[1083, 950], [1758, 970], [2043, 1105], [2076, 1150]].map(p => node(...p, '#fcd3a2', '#a8641f')).join('')}
  ${[[1654, 781], [2170, 818], [2203, 809], [2460, 994], [1975, 1253], [1751, 1363]].map(p => node(...p, '#f7fabf', '#6d7a1c')).join('')}
  <circle cx="2122" cy="1100" r="5" fill="#888"/>
  <path d="M2230 740l20 20M2030 530l15 20M1915 1235l10 5M1975 652l8 8M2400 655l16 10M2455 510l-10 80M2420 570l50 30" stroke="#fa8072" stroke-width="4" stroke-dasharray="4 8"/>
  <path d="M2428 780h80" stroke="#fa9a90" stroke-width="4" stroke-dasharray="14 6"/>
  <g stroke="#7678ee" stroke-width="3" stroke-dasharray="16 14" stroke-linecap="butt">${ferries.map(p => `<path d="M${p.join('L')}"/>`).join('')}<path d="M88 23L0 125M3445 1055L3500 1125M3445 1120L3500 1205M3445 1190L3500 1270M3445 1260L3500 1335"/></g>
  <path d="M3440 380l60 28" stroke="#fff" stroke-width="10"/><path d="M3478 553l22 4v18l-22-4z" fill="#aacbaf"/><path d="M3462 405l20 5-2 14-20-5z" fill="#d6cac0"/>
  <g stroke="#7a5db5" stroke-width="4"><circle cx="1352" cy="561" r="5"/><path d="M1352 566v28M1343 573h18M1336 580q2 14 16 14t16-14"/></g>
  <rect x="734" y="391" width="80" height="51" rx="6" fill="#f6e4cd" stroke="#e0b183" stroke-width="3"/>
  ${[[915, 1032], [1178, 880], [1127, 1416], [1581, 912], [2420, 473], [2390, 1293]].map(p => cross(...p)).join('')}
  ${car(1164, 970, '#00bc7d')}${car(1569, 735, '#155dea')}</g>`;
};
/* labels sit in plain pixels, measured from the map's own corner */
const curved = [
  ['lf', 'M324 51C348 68 372 68 412 40', 'Foreshore Road', 10, ''],
  ['mg', 'M455 308C472 305 484 312 512 318', 'MG Road', 10, ''],
  ['a3', 'M430 221C450 240 475 238 530 235', 'South Andaman', 10, 'ad']
];
/* x, y of the baseline's start, angle, text, size, class */
const straight = [
  [128, 130, 11, 'Panipat Road', 9, ''],
  [459, 273, -9, 'Foreshore Road', 10, ''],
  [692, 237, 47, 'R. P. Road', 9, ''],
  [759, 246, -46, 'GB Pant Road', 9, ''],
  [701, 389, 68, 'RTG Road', 10, ''],
  [813, 422, -6, 'RTG', 10, ''],
  [127, 277, -92, 'Port Blair Tehsil', 9, 'ad'],
  [411, 128, 89, 'Port Blair Tehsil', 9, 'ad']
];

define('map-tip', `<style>
:host{position:absolute;transform:translateX(-50%);height:20px;padding:0 8px;border-radius:10px;background:rgba(30,41,59,.92);color:#fff;font:700 11px/20px "Liberation Sans",sans-serif;white-space:nowrap;box-shadow:0 2px 5px rgba(0,0,0,.3)}
</style><slot></slot>`);

define('fleet-map', () => `<style>
:host{display:block;flex:1;min-width:0;position:relative;overflow:hidden;background:#aad3df}
svg.m{display:block}
text{font-family:"Noto Sans",sans-serif;font-size:10px;fill:#222;stroke:#fff;stroke-opacity:.75;stroke-width:2px;paint-order:stroke;stroke-linejoin:round}
.ad{fill:#8d618b}.wa{fill:#4d80b3;font-size:11px;font-style:italic}.gr{fill:#2f7a5b;font-style:italic}.ref{fill:#7a4a25;stroke:none}
.ctl{position:absolute;background:rgba(255,255,255,.95);border-radius:8px;box-shadow:0 2px 6px rgba(0,0,0,.12)}
.sel{left:14px;top:15px;width:139px;height:35px;padding:6px 12px}
.sel div{position:relative;display:flex}
.sel app-icon{position:absolute;right:14px;top:8px;color:#343a40;pointer-events:none}
select{appearance:none;width:100%;height:23px;border:1px solid #f3f4f5;border-radius:4px;background:none;padding:0;font:600 14px/20px Inter,sans-serif;color:#212529}
.chk{right:16px;top:15px;width:362px;height:37px;padding:0 12px;display:flex;align-items:center;gap:9px;font-size:16px;font-weight:500}
input{appearance:none;width:16px;height:16px;margin:0;border-radius:4px;background:#0069f7 url('data:image/svg+xml,<svg xmlns="http://www.w3.org/2000/svg" viewBox="0 0 16 16"><path fill="none" stroke="white" stroke-width="2" stroke-linecap="round" stroke-linejoin="round" d="M5 8.500l2 2 4-4.500"/></svg>')}
</style>
<svg class="m" width="1165" height="600" viewBox="0 7 1165 600" role="img" aria-label="Map of Port Blair">${drawMap()}
<g transform="translate(0 7)">
${curved.map(([id, d, t, s, c]) => `<path id="${id}" d="${d}" fill="none"/><text class="${c}" style="font-size:${s}px"><textPath href="#${id}">${t}</textPath></text>`).join('')}
${straight.map(([x, y, r, t, s, c]) => `<text class="${c}" style="font-size:${s}px" transform="translate(${x} ${y}) rotate(${r})">${t}</text>`).join('')}
<text transform="translate(481 425) rotate(-68)" text-anchor="end">Gandhi marg</text>
<text class="ref" x="258" y="135" text-anchor="middle">NH4</text>
<text class="wa" x="474" y="143" text-anchor="middle">Phoenix</text><text class="wa" x="475" y="158" text-anchor="middle">Bay</text>
<text x="636" y="156" text-anchor="middle">Marine colony</text>
<text x="648" y="245" text-anchor="middle">Aberdeen</text><text x="648" y="257" text-anchor="middle">Bazaar</text>
<text class="gr" x="779" y="300" text-anchor="middle">Netaji Stadium</text>
<text x="1151" y="155" font-style="italic">s Is</text>
</g></svg>
<map-tip style="left:523px;top:192px">Rajesh Kumar • 32 km/h</map-tip>
<map-tip style="left:387px;top:270px">Subhajit Sen • 26 km/h</map-tip>
<div class="ctl sel"><div><select aria-label="Asset filter"><option>All Assets</option></select><app-icon name="chev" size="12"></app-icon></div></div>
<label class="ctl chk"><input type="checkbox" checked>M</label>
<detail-panel></detail-panel>`);

define('detail-panel', `<style>
:host{position:absolute;right:15px;top:15px;bottom:15px;width:318px;background:#fff;border:1px solid #e2e8f0;border-radius:12px;padding:16px 17px;box-shadow:0 8px 30px rgba(0,0,0,.25)}
header{display:flex;justify-content:space-between;align-items:center;padding-right:3px}
h2{margin:0;font-size:20px;line-height:26px;font-weight:600}
button{border:0;background:none;padding:0;color:#7b7d7f;display:flex}
p{margin:0;font-size:14px;line-height:21px;color:#55595d}
.tags{display:flex;align-items:center;gap:8px;margin-top:7px}
code{font:700 13px/23px "DejaVu Sans Mono",monospace;padding:0 8px;border:1px solid #cbd5e1;border-radius:4px;background:#f1f5f9;color:#1e293b}
.box{margin:16px 0;border:1px solid #dee2e6;border-radius:8px;background:#f8f9fc;padding:16px;text-align:center;color:#55595d;font-size:15px}
.two{display:grid;grid-template-columns:1fr 1fr}
.two div:first-child{border-right:1px solid #dee2e6}
b{display:block;font-size:16px;font-weight:600;color:#212529}
.ok{color:#008f5a}
hr{border:0;border-top:1px solid #bfc1c4;margin:8px 0}
.lu b{display:inline}
h3{margin:0;font-size:16px;line-height:24px;font-weight:600;color:#0069f7}
h4{margin:4px 0 0;font-size:16px;line-height:24px;font-weight:600}
</style>
<header><h2>Rajesh Kumar</h2><button aria-label="Close"><app-icon name="close" size="17"></app-icon></button></header>
<p>Driver</p>
<div class="tags"><status-pill state="MOVING" dot="1"></status-pill><code>WB02AB1234</code></div>
<div class="box"><div class="two"><div>Speed<b>32 km/h</b></div><div>GPS Accuracy<b class="ok">8 m</b></div></div><hr><div class="lu">Last Updated: <b>12 sec ago</b></div></div>
<h3>TODAY'S ROUTE</h3><h4>Port Blair City Tour</h4><p>5 Stops • 42 km</p>`);

/* ---------- page ---------- */
define('fleet-app', `<style>
:host{display:flex;height:100vh}
.col{flex:1;min-width:0;display:flex;flex-direction:column;background:#fff}
main{flex:1;min-height:0;margin:33px 2px 0 8px;padding:19px 20px 20px;background:#f4f6fa;overflow:auto;scrollbar-width:none}
.cards{display:grid;grid-template-columns:repeat(4,1fr);gap:16px;margin:16px 0}
.work{display:flex;min-height:600px;border:1px solid #e2e8f0;border-radius:12px;overflow:hidden;box-shadow:0 1px 4px rgba(0,0,0,.08)}
</style>
<side-bar></side-bar>
<div class="col"><top-bar></top-bar>
<main><page-heading></page-heading>
<section class="cards">
<stat-card value="24" label="Active" icon="users" size="22" ink="#212529" tint="#d0fae5" tone="#00bc7d">32 total</stat-card>
<stat-card value="18" label="Moving" icon="car" size="24" ink="#0069f7" tint="#dbeafe" tone="#155dea">75% of active</stat-card>
<stat-card value="4" label="Idle" icon="clock" size="18" ink="#ffc13f" tint="#fff3cd" tone="#fd9a37">17% of active</stat-card>
<stat-card value="2" label="Offline" icon="wifi" size="24" ink="#e8194b" tint="#ffe2e4" tone="#ff2f4f">6% of total</stat-card>
</section>
<section class="work"><asset-list></asset-list><fleet-map></fleet-map></section>
</main></div>`);
</script>
</body>
</html>
